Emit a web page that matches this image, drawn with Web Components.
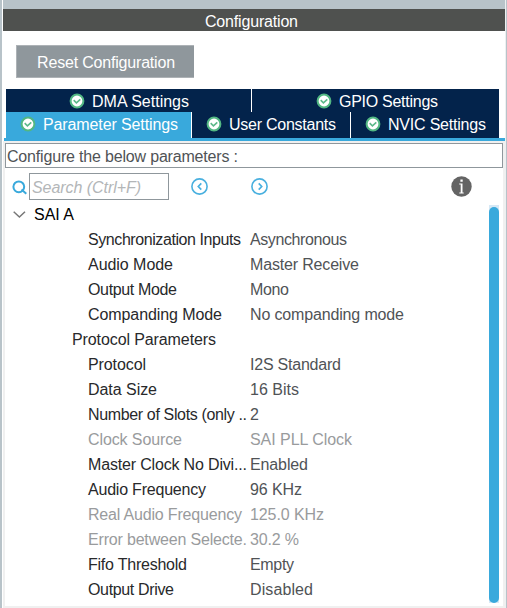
<!DOCTYPE html>
<html lang="en">
<head>
<meta charset="utf-8">
<title>Configuration</title>
<style>
html,body{margin:0;height:100%;overflow:hidden}
body{font:16px/20px "Liberation Sans",Arial,sans-serif;color:#505356;background:#b8c3c9}
</style>
</head>
<body>
<config-panel></config-panel>
<script>
const define=(name,html,setup)=>customElements.define(name,class extends HTMLElement{
  connectedCallback(){
    if(this.shadowRoot)return;
    const root=this.attachShadow({mode:"open"});
    const t=document.createElement("template");
    t.innerHTML=html;
    root.append(t.content.cloneNode(true));
    if(setup)setup(this,root);
  }
});

// A single line of text whose tracking is adjusted to a given width.
define("fit-text",`<style>:host{display:block;white-space:pre;flex:none}span{display:inline-block}</style><span></span>`,(el,root)=>{
  const span=root.querySelector("span");
  span.textContent=el.getAttribute("text");
  const w=+el.getAttribute("w"),n=span.textContent.length;
  if(w&&n>1){
    const natural=span.getBoundingClientRect().width;
    span.style.letterSpacing=((w-natural)/(n-1)).toFixed(3)+"px";
    el.style.width=w+"px";
  }
});

define("title-bar",`<style>:host{display:flex;box-sizing:border-box;height:22px;padding:3px 0 0 202px;background:#4f514f;color:#fff}</style>
<fit-text text="Configuration" w="93"></fit-text>`);

define("reset-button",`<style>:host{display:block}button{box-sizing:border-box;width:178px;height:33px;margin:0;padding:2px 0 0 20px;display:flex;align-items:center;font:inherit;color:#fff;background:#8f979c;border:1px solid #adb2b6;border-right:0}</style>
<button><fit-text text="Reset Configuration" w="138"></fit-text></button>`);

define("check-icon",`<style>:host{display:block;width:16px;height:16px;flex:none}svg{display:block}</style>
<svg width="16" height="16" viewBox="0 0 16 16"><circle cx="8" cy="8" r="6.4" fill="#fff" stroke="#52b783" stroke-width="2"/><path d="M4.7 7.2 7.4 9.8 11.3 6.3" fill="none" stroke="#5cb98a" stroke-width="1.6"/></svg>`);

define("setting-tab",`<style>:host{display:flex;box-sizing:border-box;background:#03234b;color:#fff}:host([active]){background:#39a9dc}check-icon{margin:1px 7px 0 0}</style>
<check-icon></check-icon><fit-text></fit-text>`,(el,root)=>{
  const t=document.createElement("fit-text");
  t.setAttribute("text",el.getAttribute("text"));t.setAttribute("w",el.getAttribute("w"));
  root.querySelector("fit-text").replaceWith(t);
  el.style.padding=el.getAttribute("pad");
});

define("setting-tabs",`<style>:host{display:block;height:52px;padding:0 6px 0 2px}
.row{display:grid;gap:1px}.top{grid-template-columns:245px 247px;height:22px;margin-bottom:1px}.low{grid-template-columns:185px 158px 148px;height:26px}
.band{height:3px;margin:0 -6px 0 -2px;background:#39a9dc}</style>
<div class="row top"><setting-tab text="DMA Settings" w="97" pad="3px 0 0 63px"></setting-tab><setting-tab text="GPIO Settings" w="99" pad="3px 0 0 64px"></setting-tab></div>
<div class="row low"><setting-tab active text="Parameter Settings" w="135" pad="3px 0 0 14px"></setting-tab><setting-tab text="User Constants" w="107" pad="3px 0 0 14px"></setting-tab><setting-tab text="NVIC Settings" w="98" pad="3px 0 0 14px"></setting-tab></div>
<div class="band"></div>`);

define("search-bar",`<style>:host{display:flex;height:37px}
svg{display:block;flex:none}.mag{margin:12px 0 0 7px}
.box{box-sizing:border-box;width:140px;height:27px;margin:5px 22px 0 1px;border:1px solid #8f979c;padding:4px 0 0 2px;font-style:italic;color:#b3b6b8}
.nav{margin:10px 43px 0 0}.info{margin:8px 0 0 140px}</style>
<svg class="mag" width="16" height="16" viewBox="0 0 16 16" fill="none" stroke="#39a9dc"><circle cx="6.8" cy="6.8" r="5.4" stroke-width="2"/><path d="m9.5 9.5 4.8 4.2" stroke-width="2"/></svg>
<div class="box"><fit-text text="Search (Ctrl+F)" w="109"></fit-text></div>
<svg class="nav" width="17" height="17" viewBox="0 0 17 17" fill="none" stroke="#49b0df"><circle cx="8.5" cy="8.5" r="7.6" stroke-width="1.6"/><path d="M10.3 5.3 7.3 8.5l3 3.2" stroke-width="1.7"/></svg>
<svg class="nav" width="17" height="17" viewBox="0 0 17 17" fill="none" stroke="#49b0df"><circle cx="8.5" cy="8.5" r="7.6" stroke-width="1.6"/><path d="m7.7 5.3 3 3.2-3 3.2" stroke-width="1.7"/></svg>
<svg class="info" width="21" height="21" viewBox="0 0 21 21"><circle cx="10.5" cy="10.5" r="10.2" fill="#646464"/><path d="M9.4 3.6h2.3v2.2H9.4zM8.2 7.5h3.3v9h1.2v1H8.3v-1h1.4v-8H8.2z" fill="#fff"/></svg>`);

define("param-row",`<style>:host{display:grid;grid-template-columns:162px auto;height:25px;padding-left:83px;align-items:center}
:host([group]){padding-left:67px}:host([root]){padding-left:29px}
.n{color:#28292b}:host([root]) .n{color:#000}:host([off]) .n,:host([off]) .v{color:#999b9d}
:host([root]){position:relative}svg{display:none}:host([root]) svg{display:block;position:absolute;left:8px;top:9px}</style>
<svg width="13" height="8" viewBox="0 0 13 8"><path d="M.7.8 6.4 6 12 .8" fill="none" stroke="#777" stroke-width="1.5"/></svg>`,(el,root)=>{
  for(const c of ["n","v"]){
    if(!el.hasAttribute(c))continue;
    const t=document.createElement("fit-text");
    t.className=c;t.setAttribute("text",el.getAttribute(c));t.setAttribute("w",el.getAttribute(c+"w"));
    root.append(t);
  }
});

define("param-tree",`<style>:host{display:flex;height:401px}.rows{flex:1;margin-top:-3px}
.bar{display:flow-root;width:10px;height:398px;margin-right:4px;background:#d6e8f5}.thumb{height:396px;margin-top:2px;border-radius:5px;background:#39a9dc}</style>
<div class="rows"></div><div class="bar"><div class="thumb"></div></div>`,(el,root)=>{
  const rows=[["SAI A",40,"",0,"root"],
  ["Synchronization Inputs",153,"Asynchronous",97],["Audio Mode",85,"Master Receive",109],["Output Mode",89,"Mono",39],["Companding Mode",134,"No companding mode",154],
  ["Protocol Parameters",144,"",0,"group"],
  ["Protocol",58,"I2S Standard",91],["Data Size",69,"16 Bits",49],["Number of Slots (only ..",159,"2",9],["Clock Source",94,"SAI PLL Clock",102,"off"],
  ["Master Clock No Divi...",159,"Enabled",58],["Audio Frequency",118,"96 KHz",52],["Real Audio Frequency",154,"125.0 KHz",74,"off"],["Error between Selecte.",159,"30.2 %",49,"off"],
  ["Fifo Threshold",99,"Empty",44],["Output Drive",86,"Disabled",63]];
  for(const [n,nw,v,vw,flag] of rows){
    const r=document.createElement("param-row");
    r.setAttribute("n",n);r.setAttribute("nw",nw);
    if(v){r.setAttribute("v",v);r.setAttribute("vw",vw)}
    if(flag)r.setAttribute(flag,"");
    root.querySelector(".rows").append(r);
  }
});

define("config-panel",`<style>:host{display:block;height:608px;box-sizing:border-box;padding-top:9px;background:linear-gradient(90deg,#b8c3c9 2px,#fff 2px,#fff 3px,#b8c3c9 3px,#b8c3c9 505px,#edf0f1 505px,#edf0f1 506px,#b8c3c9 506px)}
.panel{width:502px;height:599px;margin-left:3px;background:#fff}
reset-button{padding:14px 0 11px 13px}
setting-tabs{margin-left:1px}
.body{height:467px;box-sizing:border-box;padding:2px;background:#f0f0f0}
.note{box-sizing:border-box;width:498px;height:25px;border:1px solid #8f979c;background:#fff;padding:3px 0 0 1px}
.content{height:438px;background:#fff}</style>
<div class="panel"><title-bar></title-bar><reset-button></reset-button><setting-tabs></setting-tabs>
<div class="body"><div class="note"><fit-text text="Configure the below parameters :" w="231"></fit-text></div><div class="content"><search-bar></search-bar><param-tree></param-tree></div></div></div>`);
</script>
</body>
</html>
